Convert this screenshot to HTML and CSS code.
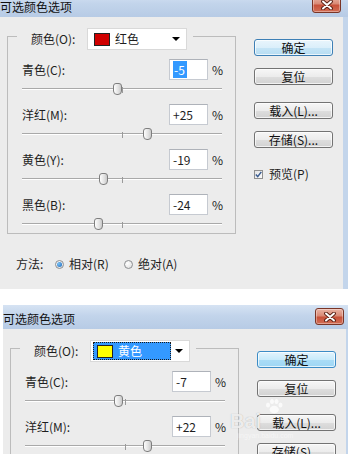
FILE: index.html
```html
<!DOCTYPE html>
<html lang="zh-CN">
<head>
    <meta charset="UTF-8">
    <meta name="viewport" content="width=device-width, initial-scale=1.0">
    <title>可选颜色选项</title>
    <link rel="stylesheet" href="styles.css">
</head>
<body>
<div class="shot">
    <!-- first dialog: red selected -->
    <div class="window first">
        <div class="titlebar">
            <span class="title">可选颜色选项</span>
            <span class="close">
                <svg width="12" height="10" viewBox="0 0 12 10"><path d="M2 1.5L10 8.5M10 1.5L2 8.5" stroke="#5a2116" stroke-width="3.8" stroke-linecap="round"/><path d="M2 1.5L10 8.5M10 1.5L2 8.5" stroke="#fff" stroke-width="1.9" stroke-linecap="round"/></svg>
            </span>
        </div>
        <div class="dialog">
            <div class="main">
                <fieldset class="group">
                    <legend>
                        <div class="legend-row">
                            <span class="legend-label">颜色(O):</span>
                            <span class="combo">
                                <span class="combo-value"><span class="swatch red"></span>红色</span>
                                <span class="combo-arrow"></span>
                            </span>
                        </div>
                    </legend>
                    <div class="adj">
                        <div class="adj-head">
                            <span class="adj-label">青色(C):</span>
                            <span class="num"><span class="sel">-5</span></span>
                            <span class="pct">%</span>
                        </div>
                        <div class="slider"><div class="track"></div><span class="tick"></span><span class="thumb" style="left: 91px"></span></div>
                    </div>
                    <div class="adj">
                        <div class="adj-head">
                            <span class="adj-label">洋红(M):</span>
                            <span class="num">+25</span>
                            <span class="pct">%</span>
                        </div>
                        <div class="slider"><div class="track"></div><span class="tick"></span><span class="thumb" style="left: 121px"></span></div>
                    </div>
                    <div class="adj">
                        <div class="adj-head">
                            <span class="adj-label">黄色(Y):</span>
                            <span class="num">-19</span>
                            <span class="pct">%</span>
                        </div>
                        <div class="slider"><div class="track"></div><span class="tick"></span><span class="thumb" style="left: 77px"></span></div>
                    </div>
                    <div class="adj">
                        <div class="adj-head">
                            <span class="adj-label">黑色(B):</span>
                            <span class="num">-24</span>
                            <span class="pct">%</span>
                        </div>
                        <div class="slider"><div class="track"></div><span class="tick"></span><span class="thumb" style="left: 72px"></span></div>
                    </div>
                </fieldset>
                <div class="method">
                    <span class="method-label">方法:</span>
                    <span class="radio on"></span><span class="radio-text">相对(R)</span>
                    <span class="radio"></span><span class="radio-text">绝对(A)</span>
                </div>
            </div>
            <div class="buttons">
                <button class="btn default">确定</button>
                <button class="btn">复位</button>
                <button class="btn load">载入(L)...</button>
                <button class="btn">存储(S)...</button>
                <div class="check">
                    <span class="box"><svg width="7" height="7" viewBox="0 0 7 7"><path d="M0.8 3.6L2.7 5.6L6.3 0.9" fill="none" stroke="#3b5d91" stroke-width="1.5"/></svg></span>
                    <span>预览(P)</span>
                </div>
            </div>
        </div>
    </div>

    <div class="spacer"></div>

    <!-- second dialog: yellow selected -->
    <div class="window second">
        <div class="titlebar">
            <span class="title">可选颜色选项</span>
            <span class="close">
                <svg width="12" height="10" viewBox="0 0 12 10"><path d="M2 1.5L10 8.5M10 1.5L2 8.5" stroke="#5a2116" stroke-width="3.8" stroke-linecap="round"/><path d="M2 1.5L10 8.5M10 1.5L2 8.5" stroke="#fff" stroke-width="1.9" stroke-linecap="round"/></svg>
            </span>
        </div>
        <div class="dialog">
            <div class="main">
                <fieldset class="group">
                    <legend>
                        <div class="legend-row">
                            <span class="legend-label">颜色(O):</span>
                            <span class="combo">
                                <span class="combo-value focus"><span class="swatch yellow"></span>黄色</span>
                                <span class="combo-arrow"></span>
                            </span>
                        </div>
                    </legend>
                    <div class="adj">
                        <div class="adj-head">
                            <span class="adj-label">青色(C):</span>
                            <span class="num">-7</span>
                            <span class="pct">%</span>
                        </div>
                        <div class="slider"><div class="track"></div><span class="tick"></span><span class="thumb" style="left: 89px"></span></div>
                    </div>
                    <div class="adj">
                        <div class="adj-head">
                            <span class="adj-label">洋红(M):</span>
                            <span class="num">+22</span>
                            <span class="pct">%</span>
                        </div>
                        <div class="slider"><div class="track"></div><span class="tick"></span><span class="thumb" style="left: 118px"></span></div>
                    </div>
                </fieldset>
            </div>
            <div class="buttons">
                <button class="btn default glow">确定</button>
                <button class="btn">复位</button>
                <button class="btn load">载入(L)...</button>
                <button class="btn">存储(S)...</button>
            </div>
        </div>
    </div>

    <div class="watermark">
        <svg class="paw" width="20" height="15" viewBox="0 0 20 15"><ellipse cx="4" cy="6" rx="2" ry="2.6"/><ellipse cx="8" cy="2.6" rx="2" ry="2.5"/><ellipse cx="12.5" cy="2.6" rx="2" ry="2.5"/><ellipse cx="16.5" cy="6" rx="2" ry="2.6"/><ellipse cx="10.2" cy="10.6" rx="4.6" ry="3.8"/></svg>
        <span class="wm-brand">Bai</span>
        <span class="wm-url">jingyan.baidu.com</span>
    </div>
</div>
</body>
</html>
```

FILE: styles.css
```css
body {
    margin: 0;
    background: #fff;
    font-family: "Noto Sans CJK SC", "Liberation Sans", sans-serif;
    font-size: 12px;
    color: #1e1e1e;
}
.shot {
    position: relative;
    width: 348px;
    height: 454px;
    overflow: hidden;
    background: #fff;
}
.window {
    width: 348px;
    background: #c3d5eb;
}
.window.first {
    margin-top: -7px;
}
.window.second {
    margin-left: 3px;
}
.spacer {
    height: 16px;
}

/* title bar */
.titlebar {
    height: 24px;
    display: flex;
    justify-content: space-between;
    align-items: flex-start;
    background: linear-gradient(#d6e3f3, #c2d4eb 45%, #b7cbe5);
}
.title {
    padding-top: 7px;
    line-height: 14px;
    color: #111;
}
.close {
    width: 29px;
    height: 17px;
    margin: 3px 7px 0 0;
    box-sizing: border-box;
    display: flex;
    align-items: center;
    justify-content: center;
    border: 1px solid #7a3526;
    border-radius: 3px;
    background: linear-gradient(#eab3a4, #d98a76 45%, #c8513a 55%, #d26e55);
    box-shadow: inset 0 0 0 1px rgba(255,255,255,0.35);
}

/* dialog body */
.dialog {
    display: flex;
    height: 272px;
    box-sizing: border-box;
    margin-right: 5px;
    padding: 5px 0 0 7px;
    background: #ececec;
}
.main {
    width: 229px;
}
.group {
    margin: 0;
    min-width: 0;
    padding: 9px 12px 2px 14px;
    border: 1px solid #bcbcbc;
}
.group legend {
    margin-left: -5px;
    padding: 6px 6px 0 14px;
}
.legend-row {
    display: flex;
    align-items: center;
    height: 22px;
}
.legend-label {
    width: 56px;
    line-height: 16px;
}
.combo {
    width: 100px;
    height: 22px;
    box-sizing: border-box;
    display: flex;
    align-items: center;
    padding: 1px 6px 1px 2px;
    border: 1px solid #d9d9d9;
    background: #fff;
}
.combo-value {
    flex: 1;
    height: 18px;
    box-sizing: border-box;
    display: flex;
    align-items: center;
    padding-left: 4px;
    line-height: 16px;
}
.combo-value.focus {
    background: #3399ff;
    color: #fff;
    outline: 1px dotted #1a1a1a;
    outline-offset: -1px;
    margin-right: 4px;
}
.swatch {
    width: 16px;
    height: 13px;
    box-sizing: border-box;
    margin-right: 5px;
    border: 1px solid #222;
}
.swatch.red {
    background: #d00000;
}
.swatch.yellow {
    background: #ffff00;
}
.combo-arrow {
    width: 0;
    height: 0;
    border-left: 4px solid transparent;
    border-right: 4px solid transparent;
    border-top: 4px solid #000;
}

/* adjustment rows */
.adj {
    margin-bottom: 8px;
}
.adj:last-child {
    margin-bottom: 0;
}
.adj-head {
    display: flex;
    align-items: center;
    height: 21px;
}
.adj-label {
    flex: 1;
    line-height: 16px;
}
.num {
    width: 39px;
    height: 21px;
    box-sizing: border-box;
    padding: 0 0 0 3px;
    display: flex;
    align-items: center;
    border: 1px solid #c6cad1;
    border-top-color: #aeb2b9;
    background: #fff;
    line-height: 16px;
}
.sel {
    background: #3399ff;
    color: #fff;
    padding: 0 2px 0 1px;
    line-height: 17px;
}
.pct {
    width: 11px;
    margin-left: 4px;
    line-height: 16px;
}
.slider {
    position: relative;
    width: 200px;
    height: 8px;
    padding-top: 8px;
}
.track {
    height: 0;
    border-top: 1px solid #a9a9a9;
    border-bottom: 1px solid #fff;
}
.tick {
    position: absolute;
    left: 100px;
    top: 7px;
    width: 1px;
    height: 6px;
    background: #9a9a9a;
}
.thumb {
    position: absolute;
    top: 3px;
    width: 9px;
    height: 12px;
    box-sizing: border-box;
    border: 1px solid #7e7e7e;
    border-radius: 3px 3px 4px 4px;
    background: linear-gradient(90deg, #fdfdfd, #e2e2e2 60%, #c9c9c9);
}

/* method row */
.method {
    display: flex;
    align-items: center;
    height: 16px;
    margin-top: 22px;
    padding-left: 9px;
    line-height: 16px;
}
.method-label {
    width: 39px;
}
.radio {
    width: 9px;
    height: 9px;
    box-sizing: border-box;
    margin-right: 5px;
    border: 1px solid #8c8e91;
    border-radius: 50%;
    background: radial-gradient(circle at 35% 35%, #fff, #dcdcdc);
    display: flex;
    align-items: center;
    justify-content: center;
}
.radio.on::after {
    content: "";
    width: 5px;
    height: 5px;
    border-radius: 50%;
    background: radial-gradient(circle at 35% 35%, #7cc3f5, #1662b8);
}
.radio-text {
    width: 55px;
}

/* buttons column */
.buttons {
    width: 79px;
    margin-left: 18px;
    padding-top: 17px;
}
.btn {
    display: block;
    width: 79px;
    height: 17px;
    box-sizing: border-box;
    margin: 0 0 12px;
    padding: 0;
    border: 1px solid #737373;
    border-radius: 3px;
    background: linear-gradient(#f6f6f6, #ececec 50%, #dedede 51%, #d2d2d2);
    box-shadow: inset 0 0 0 1px rgba(255,255,255,0.7);
    font-family: inherit;
    font-size: 12px;
    line-height: 14px;
    color: #111;
}
.btn.default {
    border-color: #3d7fb5;
    background: linear-gradient(#e9f5fc, #dbeffa 50%, #c6e5f6 51%, #b6dcf2);
}
.btn.glow {
    border-color: #3c8cc6;
    background: linear-gradient(#e3f4fd, #c8ebfb 50%, #aadcf6 51%, #9ed7f5);
}
.btn.load {
    margin-top: 17px;
}
.check {
    display: flex;
    align-items: center;
    margin-top: 18px;
    line-height: 16px;
}
.box {
    width: 9px;
    height: 9px;
    box-sizing: border-box;
    margin-right: 6px;
    border: 1px solid #8f8f8f;
    background: linear-gradient(135deg, #e4e4e4, #fafafa);
    display: flex;
    align-items: center;
    justify-content: center;
}

/* faint watermark over the second dialog */
.watermark {
    position: absolute;
    left: 228px;
    top: 398px;
    width: 100px;
    height: 44px;
    color: rgba(255,255,255,0.8);
}
.paw {
    position: absolute;
    left: 36px;
    top: 1px;
    fill: rgba(255,255,255,0.75);
}
.wm-brand {
    position: absolute;
    left: 2px;
    top: 13px;
    font-family: "Liberation Sans", sans-serif;
    font-weight: bold;
    font-size: 20px;
    line-height: 20px;
    text-shadow: 0 0 1px rgba(120,120,120,0.6);
}
.wm-url {
    position: absolute;
    left: 9px;
    top: 34px;
    font-family: "Liberation Sans", sans-serif;
    font-size: 7px;
    color: rgba(255,255,255,0.5);
}
```
